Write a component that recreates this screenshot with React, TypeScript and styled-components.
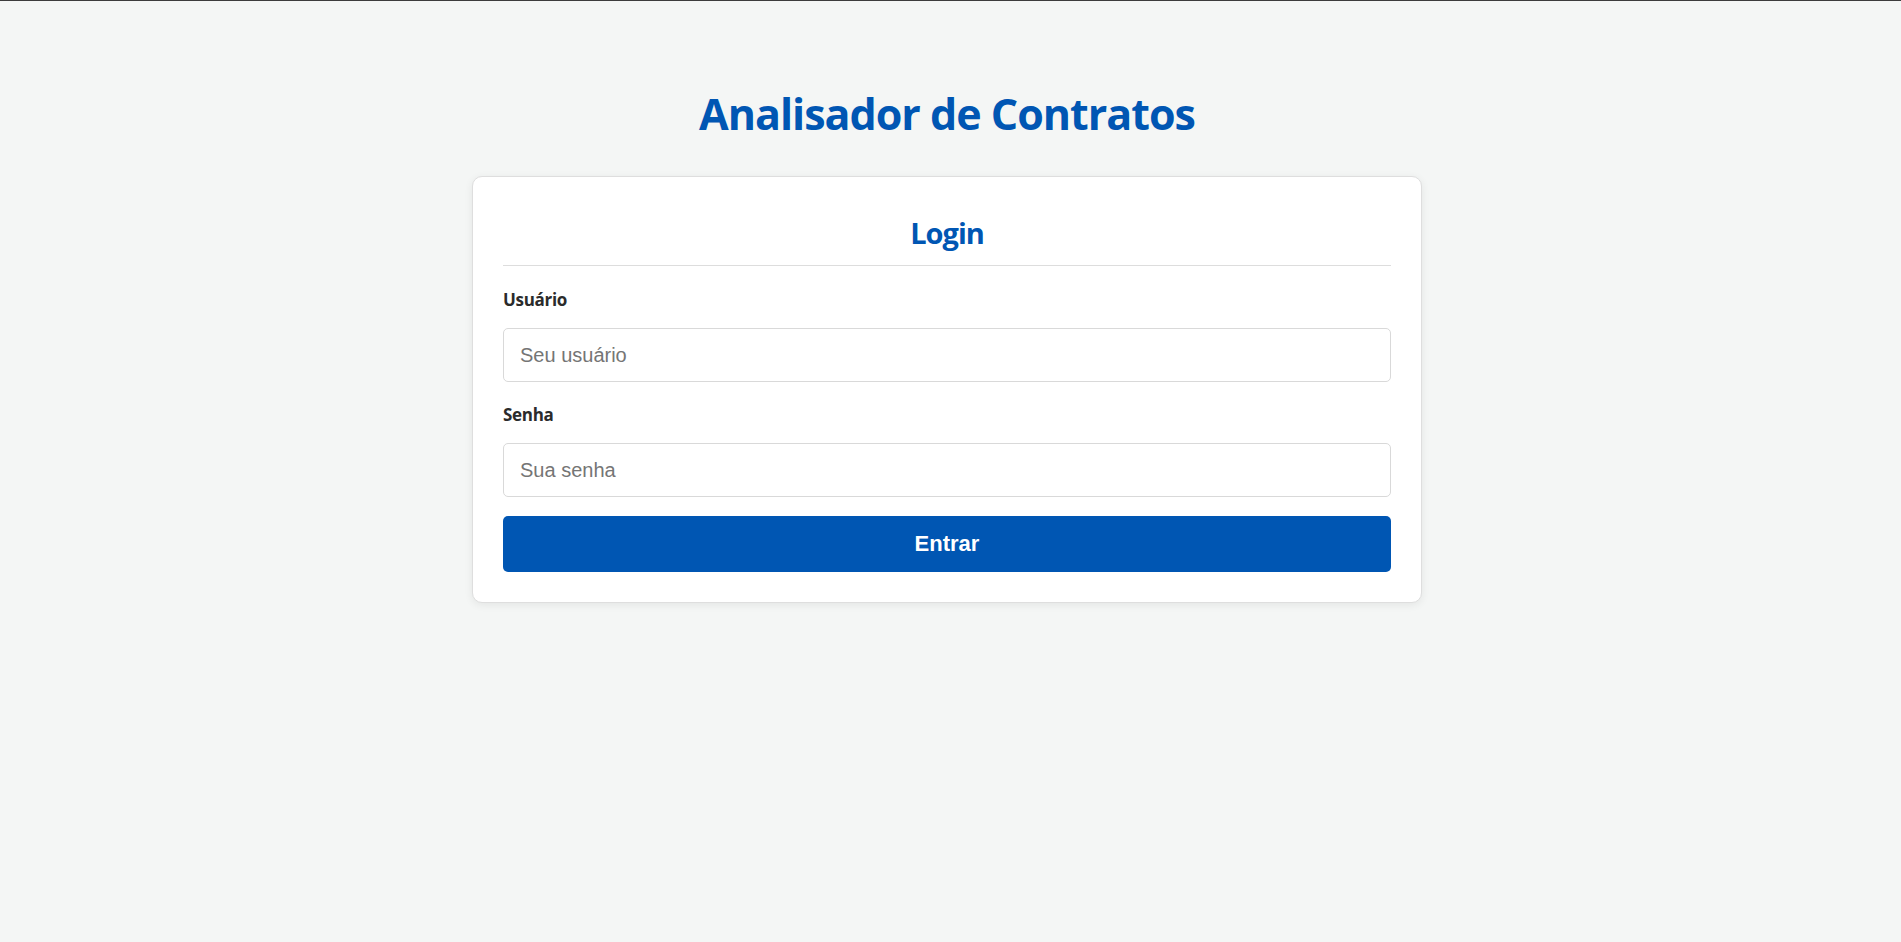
import React from "react";
import styled, { createGlobalStyle } from "styled-components";

const GlobalStyle = createGlobalStyle`
  html, body {
    margin: 0;
    padding: 0;
  }
  body {
    background: #f4f6f5;
    border-top: 1px solid #3c3c3c;
    font-family: "Open Sans", "Noto Sans", sans-serif;
    min-height: 941px;
  }
  * { box-sizing: border-box; }
`;

const Page = styled.div`
  padding: 0 7px 0 0;
`;

const Container = styled.main`
  max-width: 950px;
  margin: 0 auto;
  display: flex;
  flex-direction: column;
`;

const Title = styled.h1`
  margin: 85px 0 34px;
  font-family: "Open Sans", "Noto Sans", sans-serif;
  font-size: 43px;
  line-height: 56px;
  letter-spacing: -1px;
  font-weight: 700;
  color: #0056b3;
  text-align: center;
`;

const Card = styled.section`
  background: #ffffff;
  border: 1px solid #dedede;
  border-radius: 10px;
  box-shadow: 0 2px 8px rgba(0, 0, 0, 0.07);
  padding: 30px;
  display: flex;
  flex-direction: column;
`;

const CardTitle = styled.h2`
  margin: 0 0 22px;
  padding: 6px 0 12px;
  border-bottom: 1px solid #dddddd;
  font-size: 29px;
  line-height: 40px;
  letter-spacing: -1px;
  font-weight: 700;
  color: #0056b3;
  text-align: center;
`;

const Field = styled.div<{ $last?: boolean }>`
  display: flex;
  flex-direction: column;
  margin-bottom: ${(p) => (p.$last ? "19px" : "21px")};
`;

const Label = styled.label`
  font-size: 17px;
  line-height: 24px;
  letter-spacing: -0.3px;
  font-weight: 700;
  color: #2b2b2b;
  margin-bottom: 16px;
`;

const Input = styled.input`
  height: 54px;
  width: 100%;
  border: 1px solid #d9d9d9;
  border-radius: 5px;
  padding: 0 16px;
  font-family: "Liberation Sans", Arial, sans-serif;
  font-size: 20px;
  color: #333;
  background: #fff;
  outline: none;
  &::placeholder {
    color: #757575;
  }
`;

const Button = styled.button`
  height: 56px;
  width: 100%;
  border: none;
  border-radius: 5px;
  background: #0056b3;
  color: #ffffff;
  font-family: "Liberation Sans", Arial, sans-serif;
  font-size: 22px;
  font-weight: 700;
  cursor: pointer;
`;

export default function App() {
  return (
    <Page>
      <GlobalStyle />
      <Container>
        <Title>Analisador de Contratos</Title>
        <Card>
          <CardTitle>Login</CardTitle>
          <Field>
            <Label htmlFor="usuario">Usuário</Label>
            <Input id="usuario" type="text" placeholder="Seu usuário" />
          </Field>
          <Field $last>
            <Label htmlFor="senha">Senha</Label>
            <Input id="senha" type="password" placeholder="Sua senha" />
          </Field>
          <Button type="button">Entrar</Button>
        </Card>
      </Container>
    </Page>
  );
}
